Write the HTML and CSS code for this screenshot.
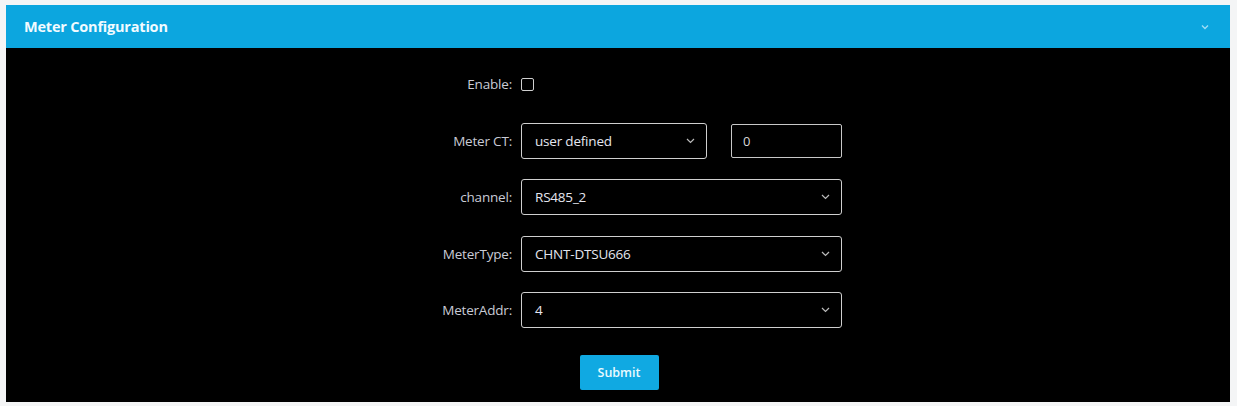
FILE: index.html
```html
<!DOCTYPE html>
<html>
<head>
<meta charset="utf-8">
<link rel="stylesheet" href="styles.css">
</head>
<body>
<div class="panel">
  <div class="panel-header">
    <span class="panel-title">Meter Configuration</span>
    <svg class="header-chevron" width="8" height="6" viewBox="0 0 8 6"><path d="M1 1.5 L4 4.5 L7 1.5" fill="none" stroke="#9fdcf5" stroke-width="1.4"/></svg>
  </div>
  <div class="panel-body">
    <div class="form-row">
      <label class="form-label">Enable:</label>
      <div class="form-control"><span class="checkbox"></span></div>
    </div>
    <div class="form-row">
      <label class="form-label">Meter CT:</label>
      <div class="form-control ct-group">
        <div class="select small">
          <span>user defined</span>
          <svg class="chev" width="9" height="6" viewBox="0 0 9 6"><path d="M1 1 L4.5 4.5 L8 1" fill="none" stroke="#bbb" stroke-width="1.2"/></svg>
        </div>
        <div class="input">0</div>
      </div>
    </div>
    <div class="form-row">
      <label class="form-label">channel:</label>
      <div class="form-control">
        <div class="select">
          <span>RS485_2</span>
          <svg class="chev" width="9" height="6" viewBox="0 0 9 6"><path d="M1 1 L4.5 4.5 L8 1" fill="none" stroke="#bbb" stroke-width="1.2"/></svg>
        </div>
      </div>
    </div>
    <div class="form-row">
      <label class="form-label">MeterType:</label>
      <div class="form-control">
        <div class="select">
          <span>CHNT-DTSU666</span>
          <svg class="chev" width="9" height="6" viewBox="0 0 9 6"><path d="M1 1 L4.5 4.5 L8 1" fill="none" stroke="#bbb" stroke-width="1.2"/></svg>
        </div>
      </div>
    </div>
    <div class="form-row">
      <label class="form-label">MeterAddr:</label>
      <div class="form-control">
        <div class="select">
          <span>4</span>
          <svg class="chev" width="9" height="6" viewBox="0 0 9 6"><path d="M1 1 L4.5 4.5 L8 1" fill="none" stroke="#bbb" stroke-width="1.2"/></svg>
        </div>
      </div>
    </div>
    <div class="submit-row">
      <button class="submit-btn">Submit</button>
    </div>
  </div>
</div>
</body>
</html>
```
FILE: styles.css
```css
html, body {
  margin: 0;
  padding: 0;
  background: #f4f5f6;
}
body {
  padding: 5px 7px 4px 6px;
  font-family: "Open Sans", "Noto Sans", sans-serif;
}
.panel {
  background: #000;
  height: 397px;
  display: flex;
  flex-direction: column;
}
.panel-header {
  height: 43px;
  background: #0ca6df;
  display: flex;
  align-items: center;
  justify-content: space-between;
  padding: 0 21px 0 18px;
  flex-shrink: 0;
}
.panel-title {
  color: #f2fbff;
  font-weight: 700;
  font-size: 14.5px;
  letter-spacing: -0.2px;
}
.panel-body {
  padding-top: 18px;
  display: flex;
  flex-direction: column;
  gap: 20.5px;
}
.form-row {
  display: grid;
  grid-template-columns: 506px 321px;
  column-gap: 9px;
  height: 36px;
  align-items: center;
}
.form-label {
  text-align: right;
  color: #c9cbd6;
  font-size: 13.5px;
  letter-spacing: -0.2px;
}
.form-control {
  display: flex;
  align-items: center;
}
.checkbox {
  width: 11px;
  height: 11px;
  border: 1.5px solid #d0d0d0;
  border-radius: 2px;
  display: inline-block;
}
.ct-group {
  gap: 24px;
}
.select {
  box-sizing: border-box;
  width: 321px;
  height: 36px;
  border: 1.5px solid #cfcfcf;
  border-radius: 3px;
  display: flex;
  align-items: center;
  justify-content: space-between;
  padding: 0 11px 0 13px;
  color: #e4e6ef;
  font-size: 13.5px;
  letter-spacing: -0.2px;
}
.select.small {
  width: 186px;
}
.input {
  box-sizing: border-box;
  width: 111px;
  height: 34px;
  border: 1.5px solid #c8c8c8;
  border-radius: 2px;
  display: flex;
  align-items: center;
  padding-left: 11px;
  color: #d8d8d8;
  font-size: 13px;
}
.submit-row {
  display: flex;
  justify-content: center;
  padding-top: 6px;
  padding-left: 2px;
}
.submit-btn {
  width: 79px;
  height: 35px;
  background: #10a9e2;
  border: none;
  border-radius: 2px;
  color: #eafaff;
  font-family: "Open Sans", "Noto Sans", sans-serif;
  font-size: 12.5px;
  font-weight: 600;
}
```
